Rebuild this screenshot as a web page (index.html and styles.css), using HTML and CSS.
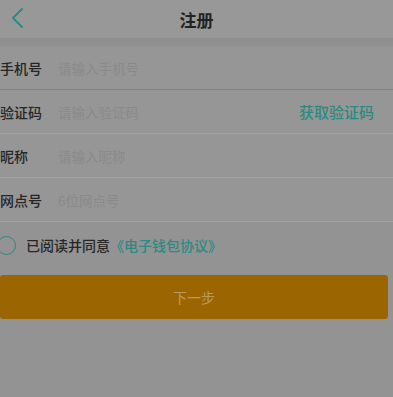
FILE: index.html
```html
<!DOCTYPE html>
<html lang="zh-CN">
<head>
    <meta charset="UTF-8">
    <meta name="viewport" content="width=device-width, initial-scale=1.0">
    <title>注册</title>
    <link rel="stylesheet" href="styles.css">
</head>
<body>
    <!-- Top bar -->
    <div class="header">
        <svg class="back" width="14" height="22" viewBox="0 0 14 22">
            <path d="M12 2 L3 11 L12 20" fill="none" stroke="#2b8a83" stroke-width="2" stroke-linecap="round" stroke-linejoin="round"/>
        </svg>
        <h1>注册</h1>
    </div>
    <div class="band"></div>

    <!-- Form rows -->
    <div class="form">
        <div class="row active">
            <span class="label">手机号</span>
            <span class="hint">请输入手机号</span>
        </div>
        <div class="row">
            <span class="label">验证码</span>
            <span class="hint">请输入验证码</span>
            <span class="code">获取验证码</span>
        </div>
        <div class="row">
            <span class="label">昵称</span>
            <span class="hint">请输入昵称</span>
        </div>
        <div class="row">
            <span class="label">网点号</span>
            <span class="hint">6位网点号</span>
        </div>
    </div>

    <div class="agree">
        <span class="check"></span>
        <span class="agree-text">已阅读并同意</span>
        <span class="link">《电子钱包协议》</span>
    </div>

    <button class="next">下一步</button>
</body>
</html>
```

FILE: styles.css
```css
body {
    margin: 0;
    padding: 0;
    background: #939393;
    font-family: "Noto Sans CJK SC", "Noto Sans", sans-serif;
    color: #262626;
    width: 393px;
    overflow: hidden;
}

.header {
    height: 38px;
    background: #989898;
    display: flex;
    align-items: center;
    justify-content: center;
    position: relative;
}

.back {
    position: absolute;
    left: 10px;
    top: 7px;
}

h1 {
    margin: 0;
    font-size: 17px;
    font-weight: bold;
    color: #222;
}

.band {
    height: 8px;
    background: #8f8f8f;
}

.form {
    background: #969696;
}

.row {
    height: 43px;
    display: flex;
    align-items: center;
    border-bottom: 1px solid #a1a1a1;
    font-size: 14px;
}

.row.active {
    border-bottom-color: #a87d2a;
}

.label {
    width: 58px;
    color: #262626;
    font-weight: 500;
}

.hint {
    flex: 1;
    color: #8a8a8a;
    font-size: 13.5px;
}

.code {
    color: #2b8a80;
    font-size: 15px;
    font-weight: 500;
    margin-right: 19px;
}

.agree {
    height: 46px;
    display: flex;
    align-items: center;
    font-size: 14px;
    font-weight: 500;
}

.check {
    width: 17px;
    height: 17px;
    border: 1.5px solid #2b8a83;
    border-radius: 50%;
    margin-left: -3px;
    margin-right: 10px;
}

.agree-text {
    color: #262626;
}

.link {
    color: #2b8a83;
}

.next {
    display: block;
    width: 388px;
    height: 44px;
    margin: 7px 0 0 0;
    border: none;
    border-radius: 3px;
    background: #9b6602;
    color: #bb9a5e;
    font-family: inherit;
    font-size: 14px;
}
```
